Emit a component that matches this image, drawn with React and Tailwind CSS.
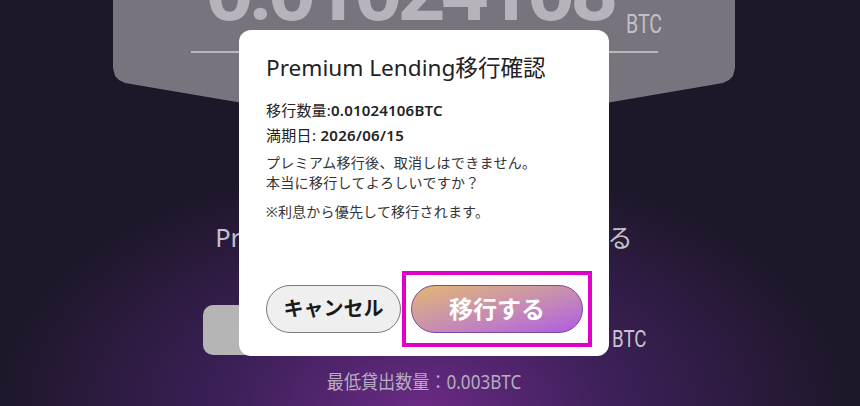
import React from "react";

const App = () => {
  return (
    <div className="relative h-[406px] w-full overflow-hidden bg-[#1d1729] font-['Noto_Sans','Noto_Sans_CJK_JP',sans-serif]">
      {/* Background glow */}
      <div className="absolute inset-0 bg-[radial-gradient(ellipse_430px_250px_at_49%_100%,#6a2a85_0%,#3c2058_45%,#1d1729_100%)]" />

      {/* Page underneath */}
      <div className="relative flex flex-col items-center pr-[12px]">
        {/* Amount card */}
        <div className="w-[622px] h-[134px] bg-[#77747d] [clip-path:polygon(0_0,100%_0,100%_68px,620px_76px,616px_80px,610px_83px,50%_100%,12px_83px,6px_80px,2px_76px,0_68px)]">
          <div className="mx-auto w-[467px] h-[53px] flex justify-end items-end border-b-2 border-[#b8b6bc]">
            <span className="mb-[17px] font-['Roboto',sans-serif] text-[84px] leading-none font-bold tracking-[-5px] text-[#b6b4ba]">
              0.01024108
            </span>
            <span className="ml-[12px] mb-[14px] w-[32px] font-['Roboto',sans-serif] text-[25px] leading-none text-[#c2c0c6]">
              <span className="inline-block origin-left scale-x-[0.78]">BTC</span>
            </span>
          </div>
        </div>

        <p className="mt-[85px] text-[25.5px] leading-[36px] text-[#c4c0cc]">
          Premium Lendingへ移行申請をする
        </p>

        <div className="mt-[50px] flex items-end gap-3">
          <div className="w-[397px] h-[50px] rounded-[10px] bg-[#b5b5b5]" />
          <span className="mb-[4px] w-[33px] font-['Roboto',sans-serif] text-[24px] leading-none text-[#c8c4d0]">
            <span className="inline-block origin-left scale-x-[0.78]">BTC</span>
          </span>
        </div>

        <p className="mt-[15px] text-[19px] leading-[24px] text-[#b4aec0]">
          <span className="inline-block scale-x-[0.9]">最低貸出数量：0.003BTC</span>
        </p>
      </div>

      {/* Confirm dialog */}
      <div className="absolute left-[239px] top-[30px] w-[370px] h-[326px] bg-white rounded-[12px] flex flex-col pt-[24px] pb-[23px]">
        <div className="px-[27px] text-[#222]">
          <h2 className="text-[22.6px] leading-[28px] font-normal">
            Premium Lending移行確認
          </h2>
          <p className="mt-[18px] text-[15px] leading-[20px] tracking-[0.2px]">
            移行数量:<span className="font-semibold">0.01024106BTC</span>
          </p>
          <p className="mt-[5px] text-[15px] leading-[20px] tracking-[0.3px]">
            満期日: <span className="font-semibold">2026/06/15</span>
          </p>
          <p className="mt-[8px] text-[14px] leading-[20px] tracking-[0.3px] text-[#333]">
            プレミアム移行後、取消しはできません。
            <br />
            本当に移行してよろしいですか？
          </p>
          <p className="mt-[9px] text-[14px] leading-[20px] tracking-[0.2px] text-[#333]">
            ※利息から優先して移行されます。
          </p>
        </div>

        <div className="mt-auto flex gap-[10px] pl-[27px] pr-[26px]">
          <button className="w-[135px] h-[48px] rounded-full bg-[#efefef] border-[1.5px] border-[#7a7a7a] text-[20px] font-bold text-[#1a1a1a]">
            キャンセル
          </button>
          <div className="relative flex-1">
            <button className="w-full h-[48px] rounded-full bg-gradient-to-br from-[#e3b66c] via-[#c98fae] to-[#b058e2] border-[1.5px] border-[#7b4a9c] text-[24px] font-bold text-white">
              移行する
            </button>
            <div className="absolute -left-[9px] -right-[9px] -top-[14px] -bottom-[14px] border-4 border-[#e000c8]" />
          </div>
        </div>
      </div>
    </div>
  );
};

export default App;
